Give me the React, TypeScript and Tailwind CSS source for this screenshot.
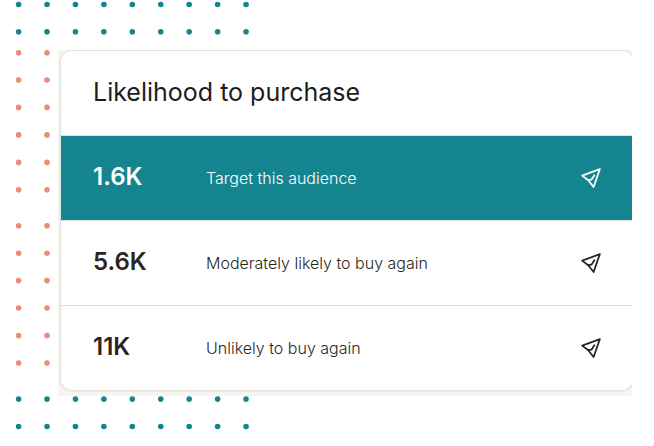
const DOT_COLUMNS = 9;
const COLUMN_STEP = 28.43;
const SIDE_DOTS = [2.7, 30, 57.4, 84.9, 112.4, 139.8, 175.8, 203.2, 230.6, 258, 285.6, 313];

function DotBand({ rows, className }: { rows: number[]; className: string }) {
  return (
    <svg aria-hidden="true" width="260" className={`block fill-[#14858f] ${className}`}>
      {rows.map((y) =>
        Array.from({ length: DOT_COLUMNS }, (_, i) => (
          <circle key={`${y}-${i}`} cx={18.6 + i * COLUMN_STEP} cy={y} r="2.8" />
        )),
      )}
    </svg>
  );
}

function SideDots() {
  return (
    <svg aria-hidden="true" className="h-80 w-[58px] shrink-0 fill-[#ec8c74]">
      {SIDE_DOTS.map((y) => (
        <g key={y}>
          <circle cx="18.6" cy={y} r="2.8" />
          <circle cx="47" cy={y} r="2.8" />
        </g>
      ))}
    </svg>
  );
}

function SendIcon() {
  return (
    <svg
      aria-hidden="true"
      viewBox="0 0 20 20"
      className="size-5 fill-none stroke-current stroke-[1.8]"
      strokeLinejoin="round"
      strokeLinecap="round"
    >
      <path d="M18.8 1.2 L1.2 7.6 L7.2 12.2 L12.6 19 Z" />
      <path d="M7.2 12.2 L10.6 11.6 L13.4 7.2" />
    </svg>
  );
}

type Audience = { count: string; label: string; active?: boolean };

const AUDIENCES: Audience[] = [
  { count: "1.6K", label: "Target this audience", active: true },
  { count: "5.6K", label: "Moderately likely to buy again" },
  { count: "11K", label: "Unlikely to buy again" },
];

function AudienceRow({ count, label, active }: Audience) {
  return (
    <li
      className={`flex h-[85px] items-center border-t border-[#dcdedb] pr-8 pl-8 ${
        active ? "bg-[#14858f] text-white" : "text-[#2b2521]"
      }`}
    >
      <span className="w-[113px] shrink-0 pb-0.5 text-2xl font-semibold">{count}</span>
      <span className="grow text-base font-light">{label}</span>
      <button type="button" aria-label={`Send to: ${label}`} className="shrink-0">
        <SendIcon />
      </button>
    </li>
  );
}

export default function App() {
  return (
    <main className="min-h-screen bg-white font-['Inter',sans-serif]">
      <DotBand rows={[4.5, 31.8]} className="h-[50px]" />
      <div className="flex pr-[22px]">
        <SideDots />
        <div className="grow overflow-hidden bg-[#f5f5f3] pb-[5px] pl-0.5">
          <section className="-mr-0.5 overflow-hidden rounded-xl border border-[#e3e3dd] bg-white shadow-[0_0_1px_1px_#ecece8]">
            <h1 className="flex h-[84px] items-center pl-8 text-[25px] font-normal text-[#1c1c1c]">
              Likelihood to purchase
            </h1>
            <ul>
              {AUDIENCES.map((audience) => (
                <AudienceRow key={audience.label} {...audience} />
              ))}
            </ul>
          </section>
        </div>
      </div>
      <DotBand rows={[3.1, 30.5]} className="h-[50px]" />
    </main>
  );
}
